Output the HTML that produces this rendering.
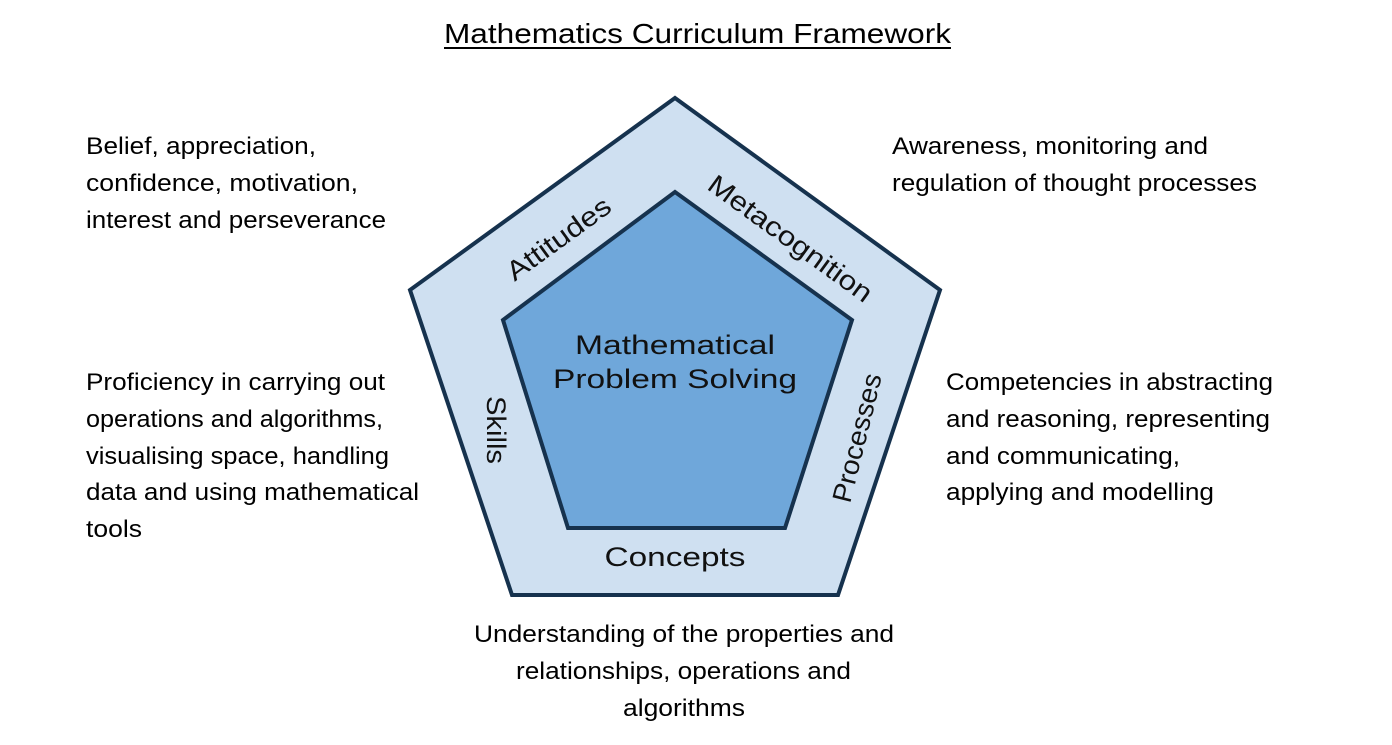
<!DOCTYPE html>
<html><head><meta charset="utf-8"><style>
html,body{margin:0;padding:0;background:#fff;}
svg{display:block;}
.t{font-family:"Liberation Sans",sans-serif;font-size:24px;fill:#000;}
.l{font-family:"Liberation Sans",sans-serif;font-size:27px;fill:#111;}
</style></head><body>
<svg width="1392" height="745" viewBox="0 0 1392 745" xmlns="http://www.w3.org/2000/svg">
<rect width="1392" height="745" fill="#fff"/>
<text class="t" x="444" y="43" textLength="507" lengthAdjust="spacingAndGlyphs" style="font-size:28px">Mathematics Curriculum Framework</text>
<rect x="444" y="47" width="507" height="2" fill="#000"/>

<polygon points="675,98 940,290 838,595 512,595 410,290" fill="#cfe0f1" stroke="#16324e" stroke-width="4" stroke-linejoin="miter"/>
<polygon points="675,192 852,320 785,528 568,528 503,320" fill="#6fa7da" stroke="#16324e" stroke-width="4"/>

<text class="l" x="675" y="354" text-anchor="middle" textLength="200" lengthAdjust="spacingAndGlyphs">Mathematical</text>
<text class="l" x="675" y="388" text-anchor="middle" textLength="244" lengthAdjust="spacingAndGlyphs">Problem Solving</text>
<text class="l" x="675" y="566" text-anchor="middle" textLength="141" lengthAdjust="spacingAndGlyphs">Concepts</text>
<text class="l" transform="translate(564,246) rotate(-36)" text-anchor="middle" textLength="122" lengthAdjust="spacingAndGlyphs">Attitudes</text>
<text class="l" transform="translate(785,246) rotate(36)" text-anchor="middle" textLength="196" lengthAdjust="spacingAndGlyphs">Metacognition</text>
<text class="l" transform="translate(487,430) rotate(90)" text-anchor="middle" textLength="68" lengthAdjust="spacingAndGlyphs">Skills</text>
<text class="l" transform="translate(866,440) rotate(-76)" text-anchor="middle" textLength="132" lengthAdjust="spacingAndGlyphs">Processes</text>

<text class="t" x="86" y="154" textLength="230" lengthAdjust="spacingAndGlyphs">Belief, appreciation,</text>
<text class="t" x="86" y="191" textLength="272" lengthAdjust="spacingAndGlyphs">confidence, motivation,</text>
<text class="t" x="86" y="228" textLength="300" lengthAdjust="spacingAndGlyphs">interest and perseverance</text>

<text class="t" x="892" y="154" textLength="316" lengthAdjust="spacingAndGlyphs">Awareness, monitoring and</text>
<text class="t" x="892" y="191" textLength="365" lengthAdjust="spacingAndGlyphs">regulation of thought processes</text>

<text class="t" x="86" y="390" textLength="299" lengthAdjust="spacingAndGlyphs">Proficiency in carrying out</text>
<text class="t" x="86" y="427" textLength="297" lengthAdjust="spacingAndGlyphs">operations and algorithms,</text>
<text class="t" x="86" y="464" textLength="303" lengthAdjust="spacingAndGlyphs">visualising space, handling</text>
<text class="t" x="86" y="500" textLength="333" lengthAdjust="spacingAndGlyphs">data and using mathematical</text>
<text class="t" x="86" y="537" textLength="56" lengthAdjust="spacingAndGlyphs">tools</text>

<text class="t" x="946" y="390" textLength="327" lengthAdjust="spacingAndGlyphs">Competencies in abstracting</text>
<text class="t" x="946" y="427" textLength="324" lengthAdjust="spacingAndGlyphs">and reasoning, representing</text>
<text class="t" x="946" y="464" textLength="234" lengthAdjust="spacingAndGlyphs">and communicating,</text>
<text class="t" x="946" y="500" textLength="268" lengthAdjust="spacingAndGlyphs">applying and modelling</text>

<text class="t" x="474" y="642" textLength="420" lengthAdjust="spacingAndGlyphs">Understanding of the properties and</text>
<text class="t" x="516" y="679" textLength="335" lengthAdjust="spacingAndGlyphs">relationships, operations and</text>
<text class="t" x="623" y="716" textLength="122" lengthAdjust="spacingAndGlyphs">algorithms</text>
</svg>
</body></html>
